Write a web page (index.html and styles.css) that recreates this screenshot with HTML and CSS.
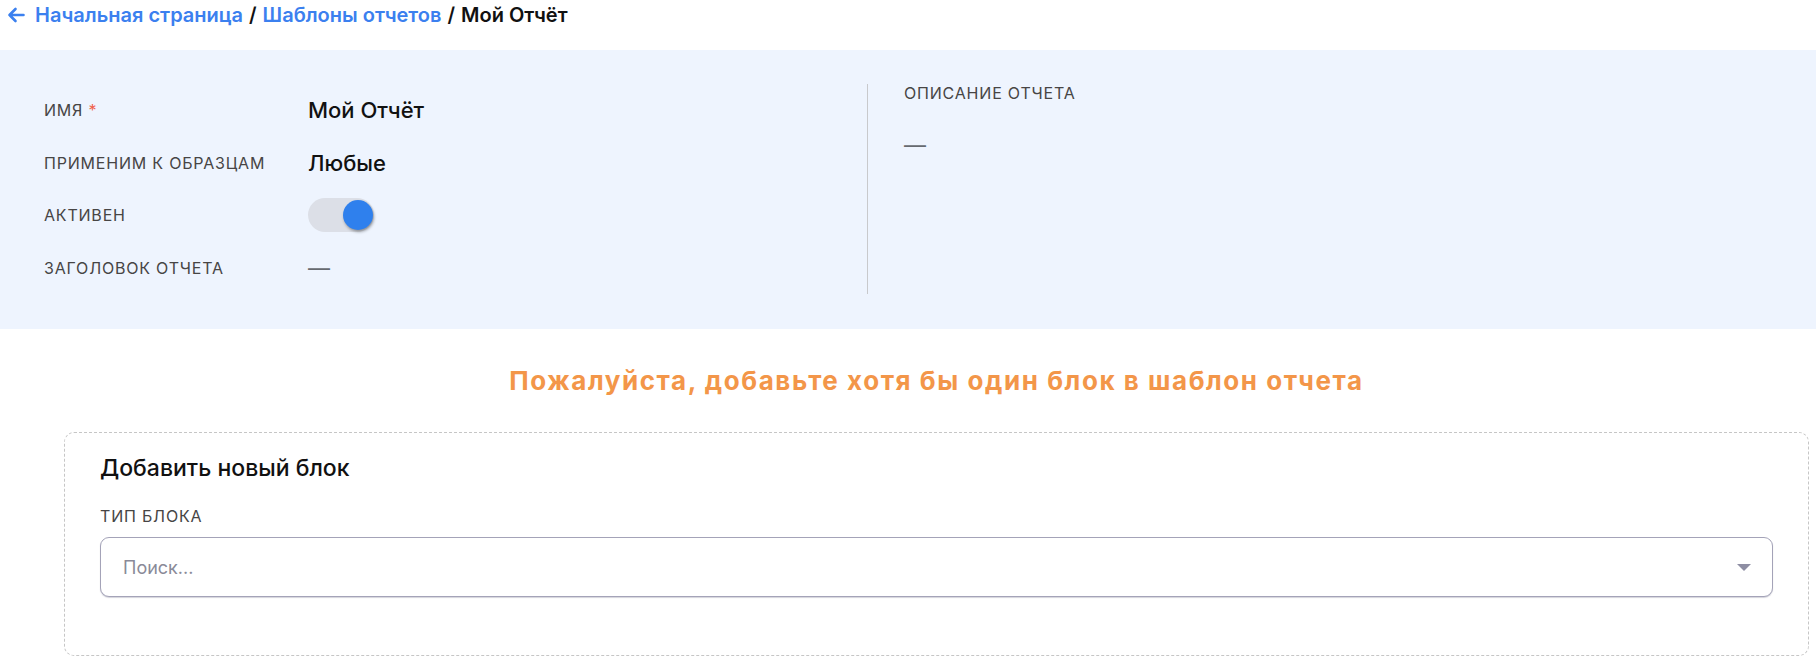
FILE: index.html
```html
<!DOCTYPE html>
<html lang="ru">
<head>
<meta charset="utf-8">
<title>Мой Отчёт</title>
<link rel="stylesheet" href="styles.css">
</head>
<body>
<nav class="crumbs">
  <svg class="back" width="18" height="16" viewBox="0 0 18 16"><path d="M16.5 8H2.5M8.5 2L2.5 8L8.5 14" fill="none" stroke="#3b80ef" stroke-width="2.6" stroke-linecap="round" stroke-linejoin="round"/></svg>
  <a class="link" href="#">Начальная страница</a><span class="sep">/</span><a class="link" href="#">Шаблоны отчетов</a><span class="sep">/</span><span class="current">Мой Отчёт</span>
</nav>

<section class="panel">
  <div class="fields">
    <div class="label">Имя <span class="req">*</span></div>
    <div class="value">Мой Отчёт</div>
    <div class="label">Применим к образцам</div>
    <div class="value">Любые</div>
    <div class="label">Активен</div>
    <div class="value"><span class="toggle"><span class="knob"></span></span></div>
    <div class="label">Заголовок отчета</div>
    <div class="value dash">—</div>
  </div>
  <div class="desc">
    <div class="label">Описание отчета</div>
    <div class="dash desc-dash">—</div>
  </div>
</section>

<main class="content">
  <h2 class="warning">Пожалуйста, добавьте хотя бы один блок в шаблон отчета</h2>
  <div class="newblock">
    <h3 class="nb-title">Добавить новый блок</h3>
    <div class="label nb-label">Тип блока</div>
    <div class="select">
      <span class="placeholder">Поиск...</span>
      <span class="caret"></span>
    </div>
  </div>
</main>
</body>
</html>
```

FILE: styles.css
```css
* { box-sizing: border-box; }
html, body { margin: 0; padding: 0; background: #ffffff; }
body {
  font-family: Inter, "Noto Sans", sans-serif;
  color: #111111;
  overflow: hidden;
}

.crumbs {
  display: flex;
  align-items: center;
  height: 30px;
  padding-left: 7px;
  font-size: 20px;
  font-weight: 600;
  white-space: nowrap;
}
.back { margin-right: 10px; flex: none; }
.link { color: #3b80ef; text-decoration: none; }
.sep { margin: 0 6px; color: #111; }
.current { color: #111; }

.panel {
  margin-top: 20px;
  background: #eef4fe;
  display: flex;
  padding: 34px 0 35px 44px;
}
.fields {
  width: 824px;
  border-right: 1px solid #c8c9cc;
  display: grid;
  grid-template-columns: 264px 1fr;
  grid-auto-rows: 52.5px;
  align-items: center;
}
.label {
  font-size: 16px;
  text-transform: uppercase;
  letter-spacing: 0.05em;
  color: #474545;
  line-height: 18px;
}
.req { color: #f0604a; }
.value {
  font-size: 22px;
  font-weight: 500;
  color: #111;
  display: flex;
  align-items: center;
}
.dash {
  color: #666a70;
  font-weight: 400;
  font-size: 22px;
  line-height: 20px;
}
.toggle {
  width: 66px;
  height: 34px;
  border-radius: 17px;
  background: #dcdfe7;
  display: flex;
  justify-content: flex-end;
  align-items: center;
  padding: 0 1px;
}
.knob {
  width: 30px;
  height: 30px;
  border-radius: 50%;
  background: #2f80ed;
  box-shadow: 1px 2px 3px rgba(0, 0, 0, 0.35);
}
.desc { padding-left: 36px; }
.desc-dash { margin-top: 33px; }

.content { padding: 0 7px 0 64px; }
.warning {
  margin: 36px 0 35px;
  text-align: center;
  font-size: 26px;
  line-height: 32px;
  font-weight: 700;
  letter-spacing: 0.06em;
  color: #f39649;
}
.newblock {
  border: 1px dashed #c6c6c6;
  border-radius: 10px;
  padding: 21px 35px 58px;
}
.nb-title {
  margin: 0;
  font-size: 23px;
  line-height: 28px;
  font-weight: 500;
  color: #111;
}
.nb-label { margin-top: 25px; }
.select {
  margin-top: 12px;
  height: 60px;
  border: 1px solid #a4a3b8;
  border-radius: 9px;
  box-shadow: 0 1px 1px rgba(80, 80, 110, 0.25);
  display: flex;
  align-items: center;
  justify-content: space-between;
  padding: 0 21px 0 22px;
  background: #fff;
}
.placeholder { font-size: 18px; color: #8a8a98; }
.caret {
  width: 0;
  height: 0;
  border-left: 7px solid transparent;
  border-right: 7px solid transparent;
  border-top: 7px solid #8e8ea3;
}
```
